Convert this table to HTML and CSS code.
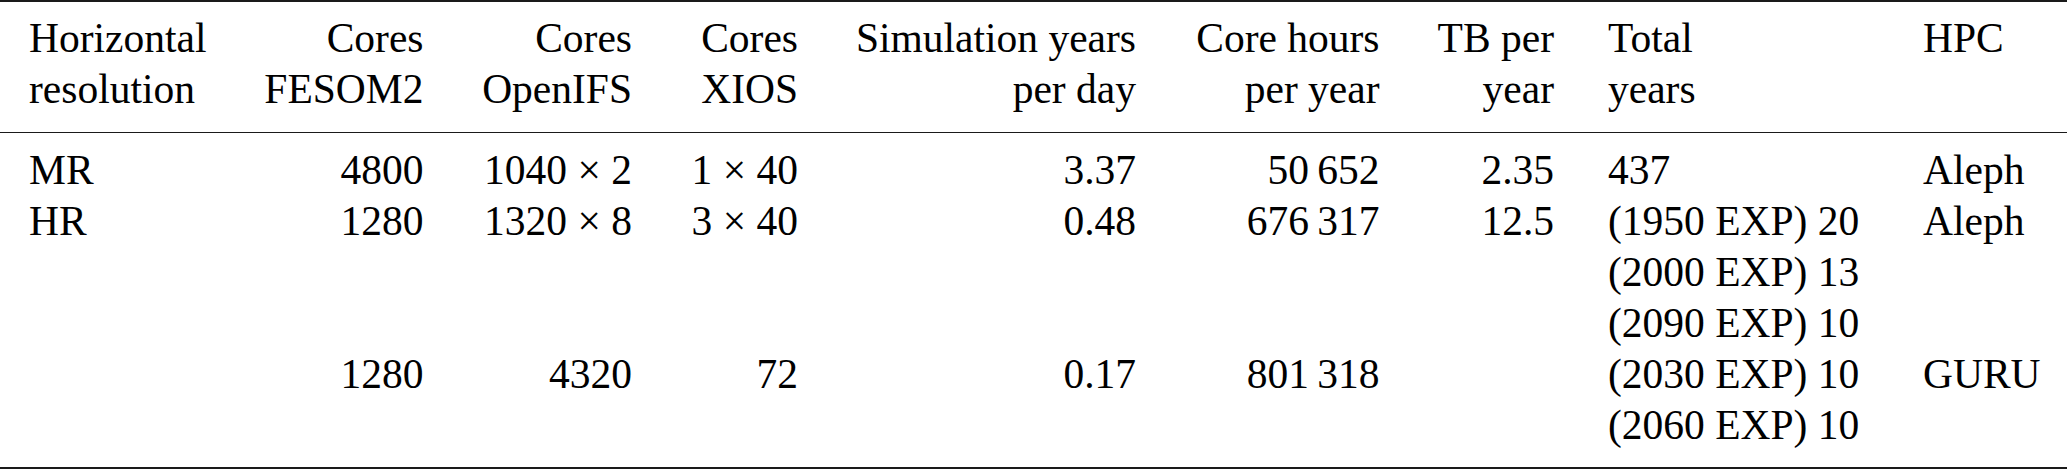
FILE: index.html
```html
<!DOCTYPE html>
<html lang="en">
<head>
<meta charset="utf-8">
<title>Table</title>
<link rel="stylesheet" href="styles.css">
</head>
<body>
<div class="page">
  <table class="tbl">
    <colgroup>
      <col class="c1"><col class="c2"><col class="c3"><col class="c4"><col class="c5"><col class="c6"><col class="c7"><col class="c8"><col class="c9">
    </colgroup>
    <thead>
      <tr>
        <th class="l">Horizontal<br>resolution</th>
        <th class="r">Cores<br>FESOM2</th>
        <th class="r">Cores<br>OpenIFS</th>
        <th class="r">Cores<br>XIOS</th>
        <th class="r">Simulation years<br>per day</th>
        <th class="r">Core hours<br>per year</th>
        <th class="r">TB per<br>year</th>
        <th class="l">Total<br>years</th>
        <th class="l">HPC</th>
      </tr>
    </thead>
    <tbody>
      <tr class="first">
        <td class="l">MR</td>
        <td class="r">4800</td>
        <td class="r">1040 × 2</td>
        <td class="r">1 × 40</td>
        <td class="r">3.37</td>
        <td class="r">50&#8201;652</td>
        <td class="r">2.35</td>
        <td class="l">437</td>
        <td class="l">Aleph</td>
      </tr>
      <tr>
        <td class="l">HR</td>
        <td class="r">1280</td>
        <td class="r">1320 × 8</td>
        <td class="r">3 × 40</td>
        <td class="r">0.48</td>
        <td class="r">676&#8201;317</td>
        <td class="r">12.5</td>
        <td class="l">(1950 EXP) 20</td>
        <td class="l">Aleph</td>
      </tr>
      <tr>
        <td></td><td></td><td></td><td></td><td></td><td></td><td></td>
        <td class="l">(2000 EXP) 13</td>
        <td></td>
      </tr>
      <tr>
        <td></td><td></td><td></td><td></td><td></td><td></td><td></td>
        <td class="l">(2090 EXP) 10</td>
        <td></td>
      </tr>
      <tr>
        <td></td>
        <td class="r">1280</td>
        <td class="r">4320</td>
        <td class="r">72</td>
        <td class="r">0.17</td>
        <td class="r">801&#8201;318</td>
        <td></td>
        <td class="l">(2030 EXP) 10</td>
        <td class="l">GURU</td>
      </tr>
      <tr class="last">
        <td></td><td></td><td></td><td></td><td></td><td></td><td></td>
        <td class="l">(2060 EXP) 10</td>
        <td></td>
      </tr>
    </tbody>
  </table>
</div>
</body>
</html>
```

FILE: styles.css
```css
html, body {
  margin: 0;
  padding: 0;
  background: #ffffff;
  overflow: hidden;
}

.page {
  width: 2067px;
}

.tbl {
  width: 2067px;
  table-layout: fixed;
  border-collapse: collapse;
  font-family: "Liberation Serif", "Times New Roman", serif;
  font-size: 41.5px;
  line-height: 51px;
  color: #000;
}

.c1 { width: 225px; }
.c2 { width: 225.5px; }
.c3 { width: 208.5px; }
.c4 { width: 166px; }
.c5 { width: 338px; }
.c6 { width: 243.5px; }
.c7 { width: 174.5px; }
.c8 { width: 315px; }
.c9 { width: 171px; }

.tbl th,
.tbl td {
  padding: 0 27px;
  vertical-align: top;
  font-weight: normal;
  white-space: nowrap;
}

.tbl th.l, .tbl td.l { text-align: left; }
.tbl th.r, .tbl td.r { text-align: right; }

.tbl th:first-child,
.tbl td:first-child { padding-left: 29px; }

.tbl thead th {
  border-top: 2px solid #1a1a1a;
  border-bottom: 1.5px solid #1a1a1a;
  padding-top: 11px;
  padding-bottom: 16.5px;
}

.tbl tbody tr.first td { padding-top: 12px; }

.tbl tbody tr.last td {
  padding-bottom: 16.5px;
  border-bottom: 2px solid #1a1a1a;
}
```
